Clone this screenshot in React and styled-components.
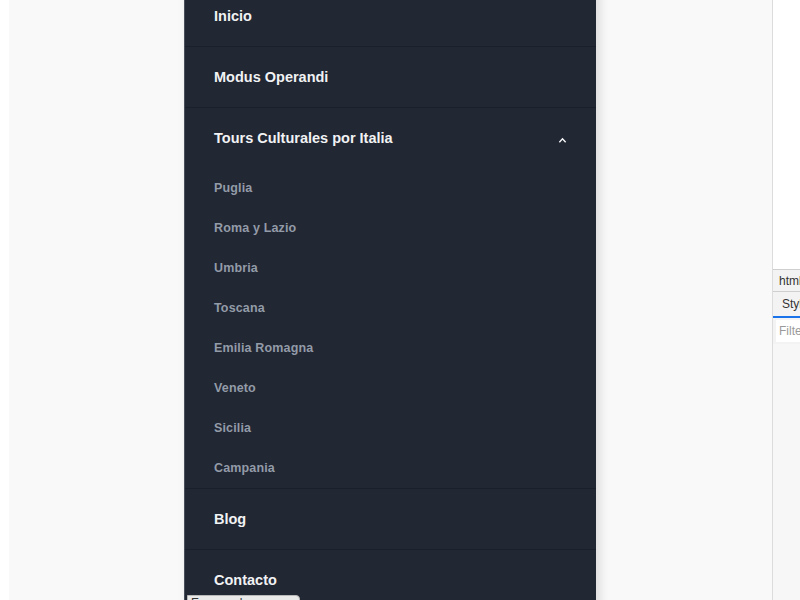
import React from 'react';
import styled, { createGlobalStyle } from 'styled-components';

const GlobalStyle = createGlobalStyle`
  html, body {
    margin: 0;
    padding: 0;
    background: #ffffff;
    overflow: hidden;
  }
  body {
    font-family: "Liberation Sans", Arial, sans-serif;
  }
`;

const PAGE = styled.div`
  display: flex;
  height: 600px;
  width: 800px;
  overflow: hidden;
  position: relative;
`;

const GUTTER = styled.div`
  width: 9px;
  background: #ffffff;
`;

const VIEWPORT = styled.div`
  flex: 1;
  background: #f9f9f9;
  border-right: 1px solid #dcdcdc;
  padding-left: 175px;
  overflow: hidden;
`;

const MENU = styled.nav`
  width: 411px;
  margin-top: -15px;
  background: #212733;
  border-left: 1px solid #4a505b;
  box-shadow: 4px 0 10px rgba(0, 0, 0, 0.12);
  min-height: 640px;
`;

const ITEM = styled.div`
  display: flex;
  align-items: center;
  justify-content: space-between;
  height: 61px;
  padding: 0 29px 0 29px;
  border-top: ${(p) => (p.$first ? 'none' : '1px solid #1a1f29')};
  color: #f1f2f4;
  font-size: 14.5px;
  font-weight: 700;
  box-sizing: border-box;
`;

const SUBLIST = styled.div`
  display: flex;
  flex-direction: column;
`;

const SUBITEM = styled.div`
  display: flex;
  align-items: center;
  height: 40px;
  padding-left: 29px;
  color: #939ba8;
  font-size: 12.5px;
  font-weight: 700;
  letter-spacing: 0.15px;
`;

const CHEVRON = styled.svg`
  width: 9px;
  height: 9px;
  margin-top: 4px;
`;

const DEVTOOLS = styled.div`
  width: 27px;
  background: #ffffff;
  display: flex;
  flex-direction: column;
  padding-top: 269px;
  font-size: 12px;
  color: #333;
  overflow: hidden;
  white-space: nowrap;
`;

const DEVROW = styled.div`
  height: ${(p) => p.$h}px;
  display: flex;
  align-items: center;
  padding-left: ${(p) => p.$pad}px;
  background: ${(p) => p.$bg};
  border-top: ${(p) => (p.$top ? '1px solid #cfcfcf' : 'none')};
  border-bottom: ${(p) => p.$bottom || 'none'};
  box-sizing: border-box;
`;

const FILTER = styled.div`
  height: 26px;
  display: flex;
  align-items: center;
  background: #f3f3f3;
  padding: 2px 0 2px 3px;
  box-sizing: border-box;
  span {
    background: #fff;
    flex: 1;
    height: 100%;
    display: flex;
    align-items: center;
    padding-left: 3px;
    color: #9a9a9a;
  }
`;

const DEVREST = styled.div`
  flex: 1;
  background: #f7f7f7;
`;

const STATUS = styled.div`
  position: absolute;
  left: 187px;
  top: 595px;
  height: 16px;
  padding: 0 10px 0 3px;
  background: #e9e9e9;
  border: 1px solid #b8b8b8;
  border-radius: 0 4px 0 0;
  font-size: 12px;
  color: #333;
  line-height: 14px;
`;

const subitems = [
  'Puglia',
  'Roma y Lazio',
  'Umbria',
  'Toscana',
  'Emilia Romagna',
  'Veneto',
  'Sicilia',
  'Campania',
];

export default function App() {
  return (
    <PAGE>
      <GlobalStyle />
      <GUTTER />
      <VIEWPORT>
        <MENU>
          <ITEM $first>Inicio</ITEM>
          <ITEM>Modus Operandi</ITEM>
          <ITEM>
            Tours Culturales por Italia
            <CHEVRON viewBox="0 0 10 10">
              <path d="M1.5 7 L5 3.2 L8.5 7" fill="none" stroke="#f1f2f4" strokeWidth="1.6" />
            </CHEVRON>
          </ITEM>
          <SUBLIST>
            {subitems.map((s) => (
              <SUBITEM key={s}>{s}</SUBITEM>
            ))}
          </SUBLIST>
          <ITEM>Blog</ITEM>
          <ITEM>Contacto</ITEM>
        </MENU>
      </VIEWPORT>
      <DEVTOOLS>
        <DEVROW $h={23} $pad={6} $bg="#f3f3f3" $top $bottom="1px solid #cfcfcf">html</DEVROW>
        <DEVROW $h={26} $pad={9} $bg="#f3f3f3" $bottom="2px solid #1a73e8">Styles</DEVROW>
        <FILTER>
          <span>Filter</span>
        </FILTER>
        <DEVREST />
      </DEVTOOLS>
      <STATUS>Esperando a ma...</STATUS>
    </PAGE>
  );
}
